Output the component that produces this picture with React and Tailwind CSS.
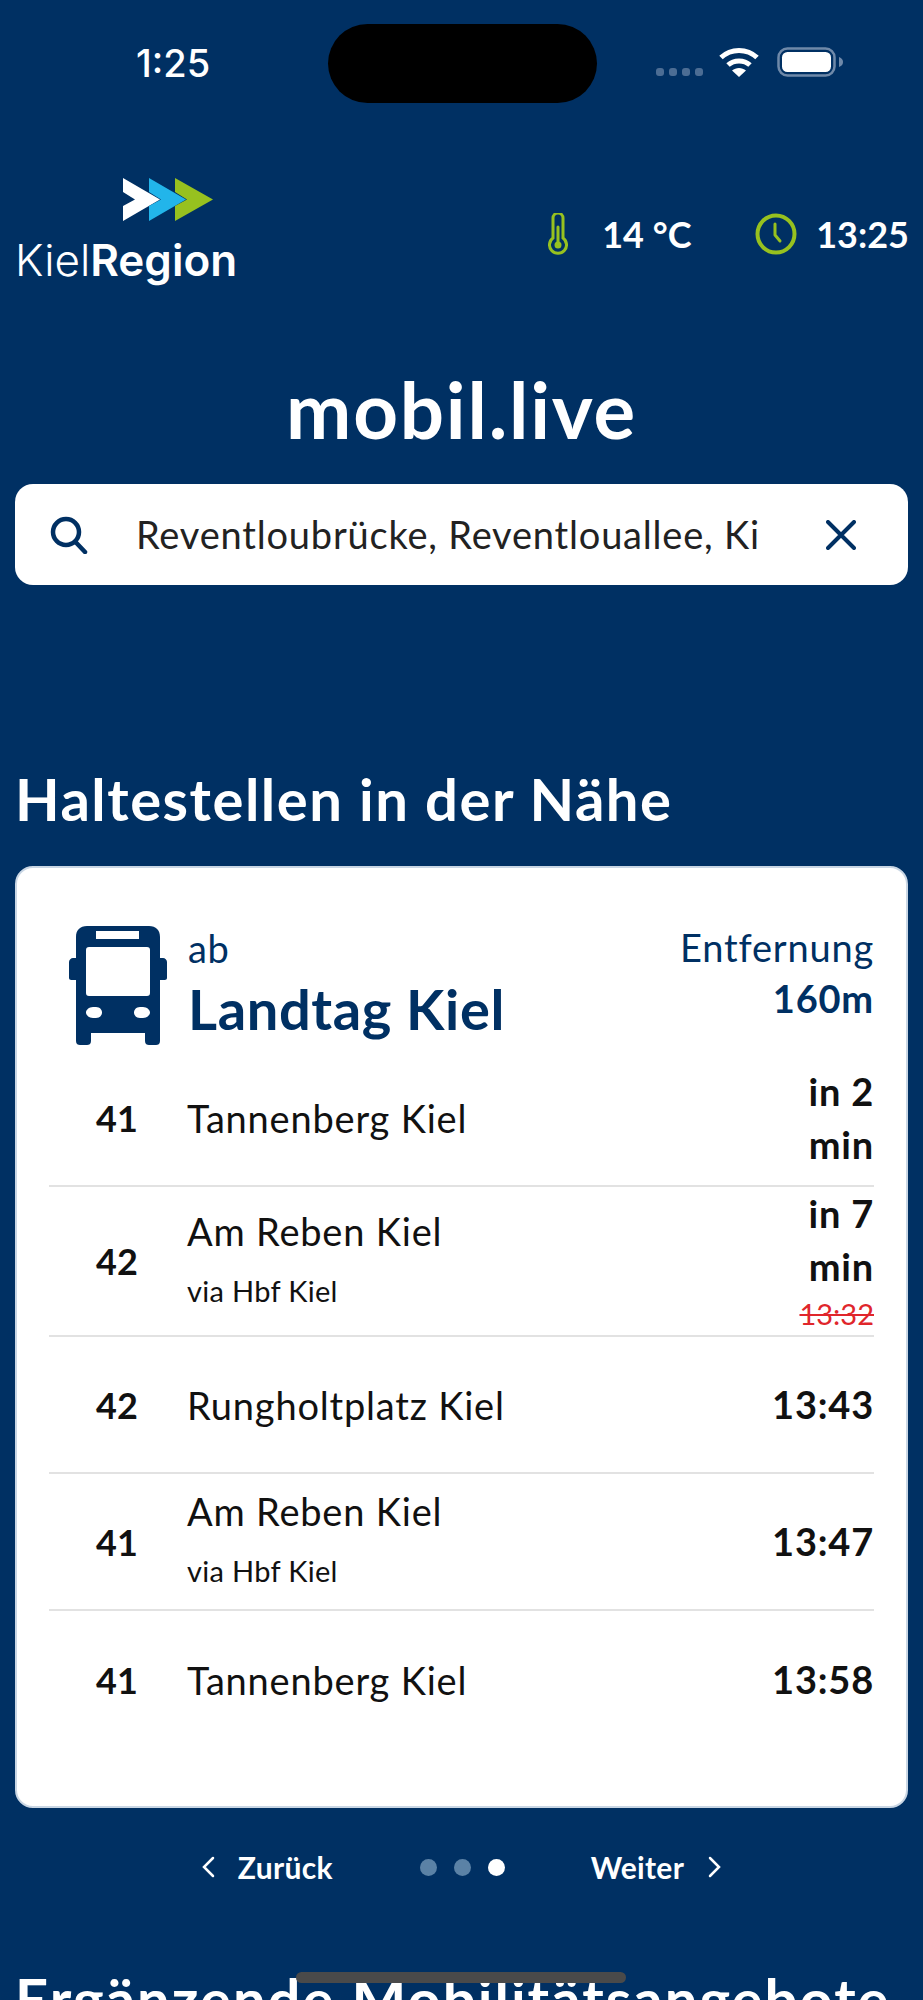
import * as React from "react";

const departures = [
  { line: "41", to: "Tannenberg Kiel", time: ["in 2", "min"] },
  { line: "42", to: "Am Reben Kiel", via: "via Hbf Kiel", time: ["in 7", "min"], old: "13:32" },
  { line: "42", to: "Rungholtplatz Kiel", time: ["13:43"] },
  { line: "41", to: "Am Reben Kiel", via: "via Hbf Kiel", time: ["13:47"] },
  { line: "41", to: "Tannenberg Kiel", time: ["13:58"], last: true },
];

function StatusBar() {
  return (
    <div className="flex h-[178px] items-start justify-between pt-[24px] pl-[136px] pr-[80px]">
      <span className="mt-[16px] w-[75px] font-['Inter',sans-serif] text-[38px] leading-[46px] font-medium text-white">1:25</span>
      <div className="ml-[116px] h-[79px] w-[269px] rounded-[40px] bg-black" />
      <div className="ml-[59px] mt-[23px] flex items-start">
        <div className="mt-[21px] flex gap-[5px]">
          <span className="size-[8px] rounded-[3px] bg-[#4c6d94]" />
          <span className="size-[8px] rounded-[3px] bg-[#4c6d94]" />
          <span className="size-[8px] rounded-[3px] bg-[#4c6d94]" />
          <span className="size-[8px] rounded-[3px] bg-[#4c6d94]" />
        </div>
        <svg className="ml-[16px]" width="40" height="30" viewBox="0 0 40 30" fill="none">
          <path d="M2 10.5C12 1 28 1 38 10.5" stroke="#fff" strokeWidth="5" />
          <path d="M9 18C15 12.5 25 12.5 31 18" stroke="#fff" strokeWidth="5" />
          <path d="M13 23.5C17 20 23 20 27 23.5L20 30Z" fill="#fff" />
        </svg>
        <svg className="ml-[18px]" width="66" height="30" viewBox="0 0 66 30" fill="none">
          <rect x="1.5" y="1.5" width="56" height="27" rx="9" stroke="#6f89a9" strokeWidth="2.5" />
          <rect x="5" y="5" width="49" height="20" rx="5.5" fill="#fff" />
          <path d="M62 10C65 11 66 13 66 15C66 17 65 19 62 20Z" fill="#6f89a9" />
        </svg>
      </div>
    </div>
  );
}

function Logo() {
  return (
    <div className="flex w-[224px] flex-col items-end">
      <svg className="mr-[26px]" width="90" height="43" viewBox="0 0 90 43">
        <path d="M0 0L37 21.5L0 43L0 28L12 21.5L0 14Z" fill="#fff" />
        <path d="M26 0L63 21.5L26 43L26 28L38 21.5L26 14Z" fill="#22b5ea" />
        <path d="M52 0L90 21.5L52 43L52 28L64 21.5L52 14Z" fill="#97c11f" />
      </svg>
      <div className="mt-[14px] w-full whitespace-nowrap font-['Inter',sans-serif] text-[44px] leading-[50px] text-white">
        <span className="font-light">Kiel</span>
        <span className="font-semibold">Region</span>
      </div>
    </div>
  );
}

function Weather() {
  return (
    <div className="-mr-[1px] mt-[35px] flex items-center text-[36px] leading-[40px] font-bold text-white">
      <svg width="20" height="42" viewBox="0 0 20 42" fill="none" stroke="#97c11f" strokeWidth="3">
        <path d="M5 5a5 5 0 0 1 10 0v20a8.5 8.5 0 1 1-10 0Z" />
        <circle cx="10" cy="32" r="3.5" fill="#97c11f" stroke="none" />
        <path d="M10 14v16" strokeLinecap="round" />
      </svg>
      <span className="ml-[34px] w-[90px] whitespace-nowrap">14 °C</span>
      <svg className="ml-[63px]" width="42" height="42" viewBox="0 0 42 42" fill="none" stroke="#97c11f">
        <circle cx="21" cy="21" r="18.5" strokeWidth="4" />
        <path d="M20 11v11l5 6" strokeWidth="3" strokeLinecap="round" strokeLinejoin="round" />
      </svg>
      <span className="ml-[19px]">13:25</span>
    </div>
  );
}

function SearchBar() {
  return (
    <div className="flex h-[101px] items-center rounded-[18px] bg-white pl-[35px] pr-[52px]">
      <svg width="38" height="38" viewBox="0 0 38 38" fill="none" stroke="#003063" strokeWidth="4.5" strokeLinecap="round">
        <circle cx="16" cy="16" r="13" />
        <path d="M25.5 26L35 36" />
      </svg>
      <input
        readOnly
        value="Reventloubrücke, Reventlouallee, Kiel"
        className="ml-[48px] w-[624px] bg-transparent text-[38px] tracking-[0.8px] text-[#222222] outline-none"
      />
      <svg className="ml-auto" width="30" height="30" viewBox="0 0 30 30" fill="none" stroke="#003063" strokeWidth="4" strokeLinecap="round">
        <path d="M2 2L28 28M28 2L2 28" />
      </svg>
    </div>
  );
}

function BusIcon() {
  return (
    <svg width="98" height="119" viewBox="0 0 98 119" fill="#003063">
      <path
        fillRule="evenodd"
        d="M18 0H80C87 0 91 4 91 11V32H94C96 32 98 34 98 36V52C98 54 96 54 94 54H91V115C91 118 89 119 87 119H80C78 119 76 118 76 115V107H22V115C22 118 20 119 18 119H11C9 119 7 118 7 115V54H4C2 54 0 54 0 52V36C0 34 2 32 4 32H7V11C7 4 11 0 18 0ZM27 5V13H70V5ZM20 21C18 21 17 22 17 24V67C17 69 18 70 20 70H78C80 70 81 69 81 67V24C81 22 80 21 78 21ZM24 81C20 81 17 84 17 86.5C17 89 20 92 24 92H27C31 92 33 89 33 86.5C33 84 31 81 27 81ZM71 81C67 81 65 84 65 86.5C65 89 67 92 71 92H74C78 92 81 89 81 86.5C81 84 78 81 74 81Z"
      />
    </svg>
  );
}

function DepartureRow({ line, to, via, time, old, last }) {
  return (
    <div className={`flex min-h-[137px] items-center ${last ? "" : "border-b-2 border-[#e2e2e2]"}`}>
      <div className="w-[138px] pl-[47px] text-[36px] font-bold text-[#111111]">{line}</div>
      <div className={`flex-1 text-[#111111] ${via ? "pb-[9px]" : ""}`}>
        <div className="text-[38px] leading-[58px] tracking-[0.8px]">{to}</div>
        {via && <div className="mt-[10px] text-[29px] leading-[42px] tracking-[0.3px]">{via}</div>}
      </div>
      <div className="text-right">
        {time.map((t) => (
          <div key={t} className="text-[38px] leading-[53px] tracking-[0.8px] font-bold text-[#111111]">{t}</div>
        ))}
        {old && <div className="text-[29px] leading-[42px] text-[#e0262b] line-through">{old}</div>}
      </div>
    </div>
  );
}

export default function App() {
  return (
    <div className="relative h-[2000px] overflow-hidden bg-[#003063] font-['Lato',sans-serif]">
      <StatusBar />

      <div className="px-[15px]">
        <div className="flex items-start justify-between">
          <Logo />
          <Weather />
        </div>

        <h1 className="mt-[81px] text-center text-[78px] leading-[86px] tracking-[1.8px] font-bold text-white">mobil.live</h1>

        <div className="mt-[32px]">
          <SearchBar />
        </div>

        <h2 className="mt-[180px] text-[58px] leading-[68px] tracking-[1.5px] font-bold text-white">Haltestellen in der Nähe</h2>

        <div className="mt-[33px] rounded-[18px] border-2 border-[#c9d6e4] bg-white px-[32px] pt-[58px] pb-[58px]">
          <div className="flex h-[124px] items-start">
            <div className="ml-[20px]">
              <BusIcon />
            </div>
            <div className="ml-[21px] flex-1 text-[#003063]">
              <div className="text-[38px] leading-[44px] tracking-[0.6px]">ab</div>
              <div className="mt-[6px] text-[56px] leading-[66px] tracking-[0.6px] font-bold">Landtag Kiel</div>
            </div>
            <div className="-mt-[4px] text-right text-[38px] leading-[51px] tracking-[0.8px] text-[#003063]">
              <div>Entfernung</div>
              <div className="font-bold">160m</div>
            </div>
          </div>

          {departures.map((d, i) => (
            <DepartureRow key={i} {...d} />
          ))}
        </div>

        <div className="mt-[37px] flex items-center justify-center text-[30px] leading-[44px] tracking-[0.3px] font-bold text-white">
          <svg width="14" height="22" viewBox="0 0 14 22" fill="none" stroke="#fff" strokeWidth="2.5" strokeLinecap="round">
            <path d="M12 2L3 11L12 20" />
          </svg>
          <span className="ml-[23px]">Zurück</span>
          <div className="ml-[87px] flex gap-[17px]">
            <span className="size-[17px] rounded-full bg-[#5b82a6]" />
            <span className="size-[17px] rounded-full bg-[#5b82a6]" />
            <span className="size-[17px] rounded-full bg-white" />
          </div>
          <span className="ml-[86px]">Weiter</span>
          <svg className="ml-[24px]" width="14" height="22" viewBox="0 0 14 22" fill="none" stroke="#fff" strokeWidth="2.5" strokeLinecap="round">
            <path d="M2 2L11 11L2 20" />
          </svg>
        </div>

        <h2 className="mt-[76px] whitespace-nowrap text-[58px] leading-[68px] tracking-[2px] font-bold text-white">Ergänzende Mobilitätsangebote</h2>
      </div>

      {/* home indicator lies over the page */}
      <div className="absolute left-[296px] top-[1972px] h-[11px] w-[330px] rounded-full bg-[#4a4a4a]" />
    </div>
  );
}
